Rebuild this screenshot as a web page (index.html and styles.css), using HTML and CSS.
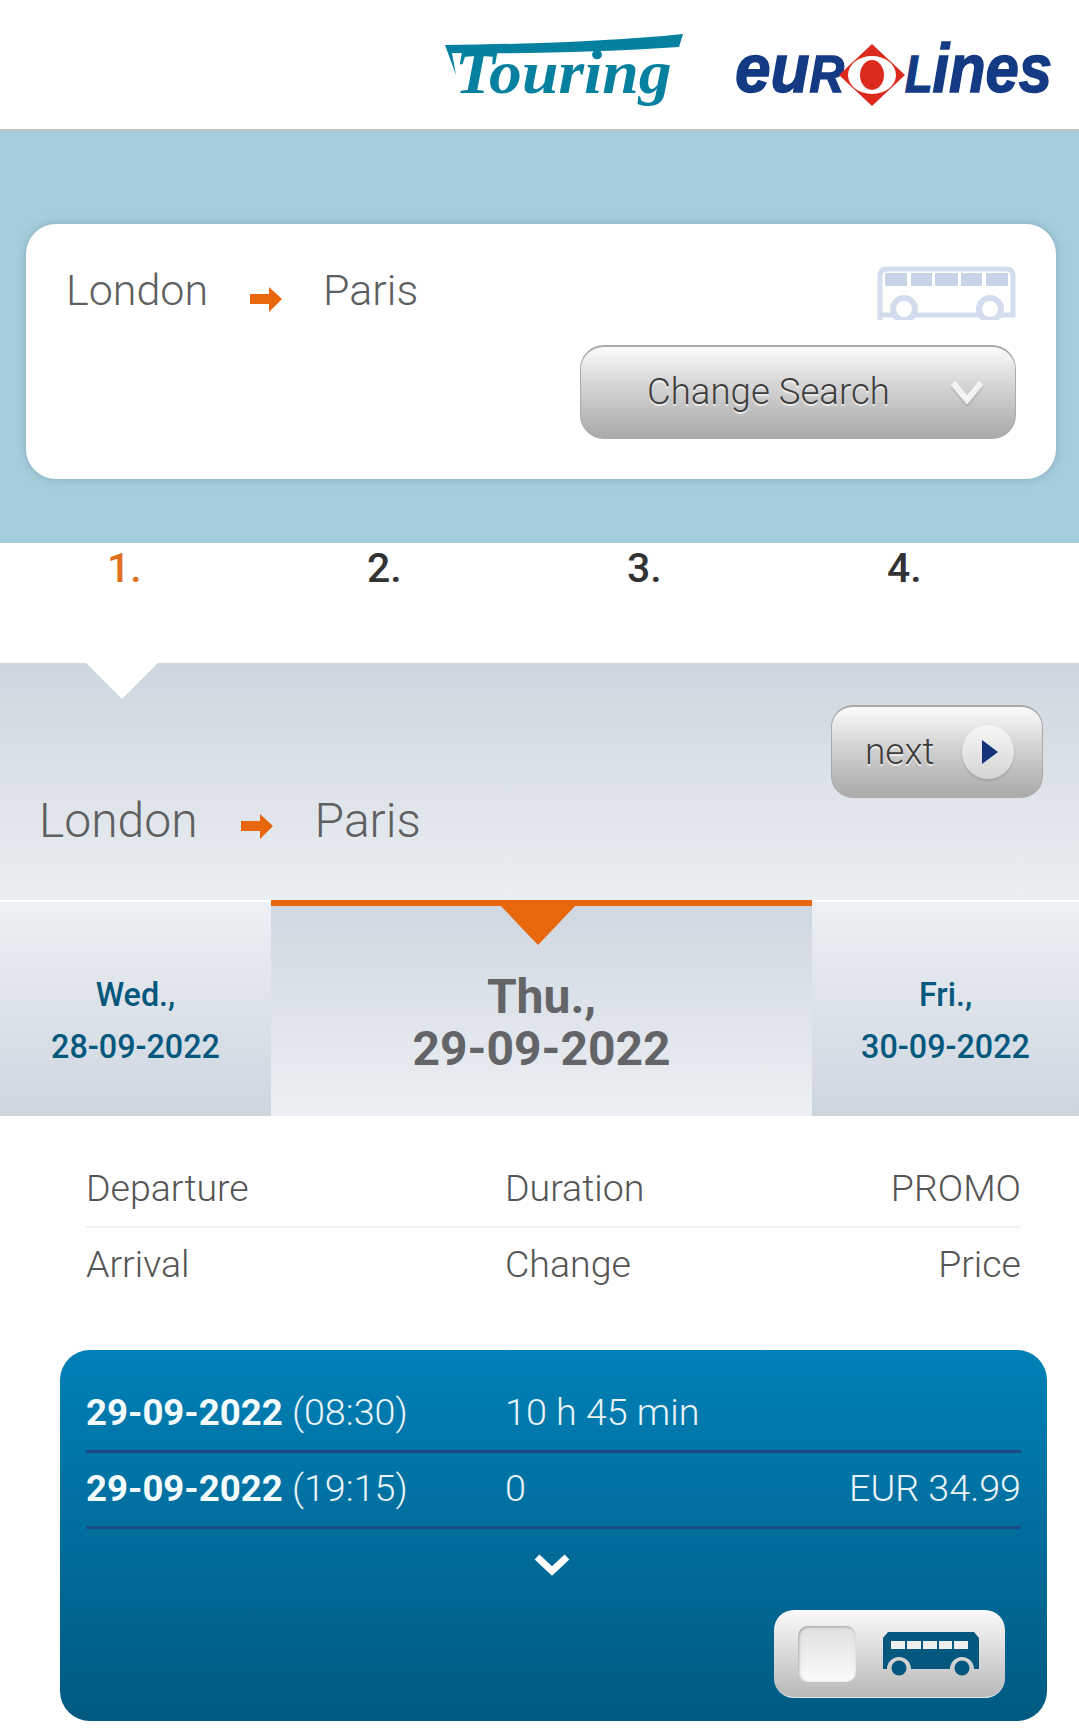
FILE: index.html
```html
<!DOCTYPE html>
<html lang="en">
<head>
<meta charset="utf-8">
<title>Touring Eurolines</title>
<link rel="stylesheet" href="styles.css">
</head>
<body>
<header class="header">
  <svg class="logo-touring" viewBox="0 0 240 82" width="240" height="82">
    <path class="teal" d="M0 13 C90 12 170 9 238 2 L234 15 C160 20 80 22 7 21 L11 43 Z"/>
    <text class="touring-text" transform="translate(10 61) scale(1.06 1)">Touring</text>
  </svg>
  <svg class="logo-euro" viewBox="0 0 317 64" width="317" height="64">
    <text class="euro-text" transform="translate(0 49) scale(0.94 1)">eu<tspan class="euro-cap">R</tspan></text>
    <path class="euro-red" d="M137 1 L170 32 L137 63 L104 32 Z"/>
    <ellipse class="euro-white" cx="137" cy="32" rx="24" ry="19"/>
    <ellipse class="euro-red" cx="137" cy="32" rx="12" ry="15"/>
    <text class="euro-text" transform="translate(170 49) scale(0.88 1)"><tspan class="euro-cap">L</tspan>ines</text>
  </svg>
</header>

<section class="search-band">
  <div class="search-card">
    <div class="search-top">
      <div class="route route-small">
        <span>London</span>
        <svg class="arrow" viewBox="0 0 32 25" width="32" height="25"><path d="M0 7 H19 V0 L32 12 L19 25 V17 H0 Z"/></svg>
        <span>Paris</span>
      </div>
      <svg class="bus-pale" viewBox="0 0 139 54" width="139" height="54">
        <path class="pale-line" d="M3 54 V10 Q3 3 10 3 H129 Q136 3 136 10 V49 H3"/>
        <g class="pale-fill">
          <rect x="8" y="7" width="22" height="13"/><rect x="34" y="7" width="21" height="13"/><rect x="58" y="7" width="23" height="13"/><rect x="84" y="7" width="21" height="13"/><rect x="109" y="7" width="22" height="13"/>
        </g>
        <circle class="pale-wheel" cx="27" cy="43" r="11"/>
        <circle class="pale-wheel" cx="113" cy="43" r="11"/>
      </svg>
    </div>
    <div class="search-bottom">
      <button class="btn btn-change" type="button">
        <span>Change Search</span>
        <svg class="chev-btn" viewBox="0 0 34 24" width="34" height="24"><path d="M3 3 L17 20 L31 3"/></svg>
      </button>
    </div>
  </div>
</section>

<ol class="steps">
  <li class="step step-active">1.</li>
  <li class="step">2.</li>
  <li class="step">3.</li>
  <li class="step">4.</li>
</ol>

<section class="route-band">
  <div class="notch"></div>
  <div class="route route-large">
    <span>London</span>
    <svg class="arrow" viewBox="0 0 32 25" width="32" height="25"><path d="M0 7 H19 V0 L32 12 L19 25 V17 H0 Z"/></svg>
    <span>Paris</span>
  </div>
  <button class="btn btn-next" type="button">
    <span>next</span>
    <span class="next-circle"><svg viewBox="0 0 16 24" width="16" height="24"><path d="M0 0 L16 12 L0 24 Z"/></svg></span>
  </button>
</section>

<nav class="dates">
  <a class="date-side">Wed.,<br>28-09-2022</a>
  <a class="date-active"><span class="date-marker"></span>Thu.,<br>29-09-2022</a>
  <a class="date-side">Fri.,<br>30-09-2022</a>
</nav>

<section class="columns">
  <div class="col-row col-row-line"><span>Departure</span><span>Duration</span><span>PROMO</span></div>
  <div class="col-row"><span>Arrival</span><span>Change</span><span>Price</span></div>
</section>

<section class="trip">
  <div class="trip-row"><span><b>29-09-2022</b> (08:30)</span><span>10 h 45 min</span><span></span></div>
  <div class="trip-row"><span><b>29-09-2022</b> (19:15)</span><span>0</span><span>EUR 34.99</span></div>
  <div class="trip-more"><svg viewBox="0 0 36 22" width="36" height="22"><path d="M3 3 L18 17 L33 3"/></svg></div>
  <div class="trip-actions">
    <div class="select-btn">
      <span class="checkbox"></span>
      <svg class="bus-solid" viewBox="0 0 96 44" width="96" height="44">
        <path class="bus-body" d="M5 0 H91 L96 6 V37 H91 A12 12 0 0 0 67 37 H28 A12 12 0 0 0 4 37 H0 V6 Z"/>
        <g class="bus-win">
          <rect x="8" y="9" width="14" height="8"/><rect x="24" y="9" width="14" height="8"/><rect x="40" y="9" width="14" height="8"/><rect x="56" y="9" width="13" height="8"/><rect x="71" y="9" width="14" height="8"/>
        </g>
        <circle class="bus-body" cx="16" cy="36" r="7.5"/>
        <circle class="bus-body" cx="79" cy="36" r="7.5"/>
      </svg>
    </div>
  </div>
</section>
</body>
</html>
```
FILE: styles.css
```css
* { box-sizing: border-box; }
html, body { margin: 0; padding: 0; }
body {
  width: 1079px;
  height: 1736px;
  overflow: hidden;
  background: #fff;
  font-family: Roboto, "Liberation Sans", sans-serif;
  font-weight: 300;
  color: #555;
}

/* header */
.header {
  height: 131px;
  display: flex;
  justify-content: flex-end;
  padding: 32px 27px 0 0;
  background: #fff;
  border-bottom: 2px solid #c3c3c3;
}
.logo-touring { display: block; margin-right: 50px; overflow: visible; }
.logo-euro { display: block; margin-top: 11px; overflow: visible; }
.teal { fill: #05819f; }
.touring-text {
  font-family: "Liberation Serif", serif;
  font-style: italic;
  font-weight: 700;
  font-size: 62px;
  fill: #05819f;
}
.euro-text {
  font-family: "Liberation Sans", sans-serif;
  font-style: italic;
  font-weight: 700;
  font-size: 68px;
  fill: #143a84;
  stroke: #143a84;
  stroke-width: 1.5;
}
.euro-cap { font-size: 51px; }
.euro-red { fill: #dc2a1e; stroke: none; }
.euro-white { fill: #fff; }

/* search band */
.search-band {
  height: 412px;
  padding: 93px 23px 0 26px;
  background: #a6cddc;
}
.search-card {
  height: 255px;
  padding: 42px 40px 0 40px;
  background: #fff;
  border-radius: 30px;
  box-shadow: 0 0 8px rgba(90, 130, 150, 0.45);
}
.search-top { display: flex; justify-content: space-between; align-items: flex-start; }
.search-bottom { display: flex; justify-content: flex-end; margin-top: 25px; }

.route { display: flex; align-items: flex-start; color: #5e5f61; }
.route span { display: block; }
.route-small { font-size: 43px; line-height: 48px; }
.route-small .arrow { margin: 21px 41px 0 42px; }
.route-large { font-size: 48px; line-height: 56px; margin-top: 88px; }
.route-large .arrow { margin: 21px 42px 0 43px; }
.arrow { display: block; flex: none; fill: #e8660c; }

.pale-line { fill: none; stroke: #d4dded; stroke-width: 5; }
.pale-wheel { fill: #fff; stroke: #d4dded; stroke-width: 6; }
.pale-fill { fill: #c7d3e6; }
.bus-pale { display: block; }

/* buttons */
.btn {
  display: flex;
  align-items: center;
  padding: 0;
  font-family: inherit;
  font-weight: 300;
  color: #3d3d3d;
  text-shadow: 0 2px 1px rgba(255, 255, 255, 0.7);
  background: linear-gradient(#fbfbfb 0%, #d6d6d6 40%, #adadad 95%);
  border: 1px solid #aaa;
  border-top: 2px solid #aaa;
}
.btn-change {
  width: 436px;
  height: 94px;
  padding: 0 0 2px 66px;
  font-size: 36.6px;
  line-height: 40px;
  border-radius: 24px;
}
.chev-btn {
  display: block;
  margin-left: 60px;
  fill: none;
  stroke: #f3f3f3;
  stroke-width: 6;
  filter: drop-shadow(0 2px 1px rgba(0, 0, 0, 0.15));
}

/* steps */
.steps {
  display: grid;
  grid-template-columns: repeat(3, 260px) 1fr;
  height: 120px;
  margin: 0;
  padding: 2px 0 0 107px;
  list-style: none;
}
.step {
  font-size: 41px;
  line-height: 47px;
  font-weight: 500;
  color: #333;
}
.step-active { color: #e2711d; }

/* route band */
.route-band {
  position: relative;
  display: flex;
  justify-content: space-between;
  align-items: flex-start;
  height: 237px;
  padding: 42px 36px 0 39px;
  background: linear-gradient(#cdd6df, #ebeef2);
}
.notch {
  position: absolute;
  left: 86px;
  top: 0;
  width: 0;
  height: 0;
  border-left: 36px solid transparent;
  border-right: 36px solid transparent;
  border-top: 36px solid #fff;
}
.btn-next {
  width: 212px;
  height: 93px;
  padding-left: 33px;
  font-size: 37px;
  line-height: 40px;
  border-radius: 22px;
}
.next-circle {
  display: flex;
  align-items: center;
  justify-content: center;
  width: 52px;
  height: 54px;
  margin-left: 28px;
  border-radius: 50%;
  background: linear-gradient(#f7f7f7, #d4d4d4);
  box-shadow: 0 2px 3px rgba(0, 0, 0, 0.12);
}
.next-circle svg { display: block; margin-left: 4px; fill: #14317c; }

/* dates */
.dates {
  display: grid;
  grid-template-columns: 271px 541px 267px;
  height: 216px;
  font-weight: 500;
  text-align: center;
}
.date-side {
  padding-top: 67px;
  font-size: 32.3px;
  line-height: 52px;
  color: #05587d;
  border-top: 2px solid #fff;
  background: linear-gradient(#edf0f4, #cdd5df);
}
.date-active {
  position: relative;
  padding-top: 65px;
  font-size: 48px;
  line-height: 52px;
  font-weight: 700;
  color: #636467;
  border-top: 6px solid #e8660c;
  background: linear-gradient(#cfd7e0, #edf0f4);
}
.date-marker {
  position: absolute;
  left: 229px;
  top: -1px;
  width: 0;
  height: 0;
  border-left: 38px solid transparent;
  border-right: 38px solid transparent;
  border-top: 40px solid #e8660c;
}

/* columns */
.columns { padding: 41px 58px 0 86px; height: 234px; }
.col-row {
  display: grid;
  grid-template-columns: 419px 1fr auto;
  height: 76px;
  font-size: 37.5px;
  line-height: 72px;
  color: #555;
}
.col-row-line { height: 71px; line-height: 62px; border-bottom: 2px solid #f2f2f2; }

/* trip card */
.trip {
  width: 987px;
  height: 371px;
  margin-left: 60px;
  padding: 27px 26px 0;
  color: #eaf4f8;
  border-radius: 30px;
  background: linear-gradient(#0080b6, #005a82);
}
.trip-row {
  display: grid;
  grid-template-columns: 419px 1fr auto;
  height: 76px;
  padding-top: 10px;
  font-size: 37.7px;
  line-height: 50px;
  border-bottom: 3px solid #1d4c84;
}
.trip-row b { font-size: 36.6px; font-weight: 700; color: #f4fbfd; }
.trip-more { height: 78px; padding: 25px 0 0 448px; }
.trip-more svg { display: block; fill: none; stroke: #fff; stroke-width: 7; }
.trip-actions { display: flex; justify-content: flex-end; padding-right: 16px; margin-top: 3px; }
.select-btn {
  display: flex;
  align-items: center;
  width: 231px;
  height: 88px;
  padding-left: 24px;
  border-radius: 20px;
  background: linear-gradient(#fafafa, #b9b9b9);
  border-bottom: 1px solid #dfeaf0;
}
.checkbox {
  display: block;
  width: 58px;
  height: 56px;
  border-radius: 10px;
  background: linear-gradient(#e0e0e0, #fbfbfb);
  box-shadow: inset 1px 1px 3px rgba(0, 0, 0, 0.3);
}
.bus-solid { display: block; margin-left: 27px; }
.bus-body { fill: #05587d; }
.bus-win { fill: #eeeeee; }
```
